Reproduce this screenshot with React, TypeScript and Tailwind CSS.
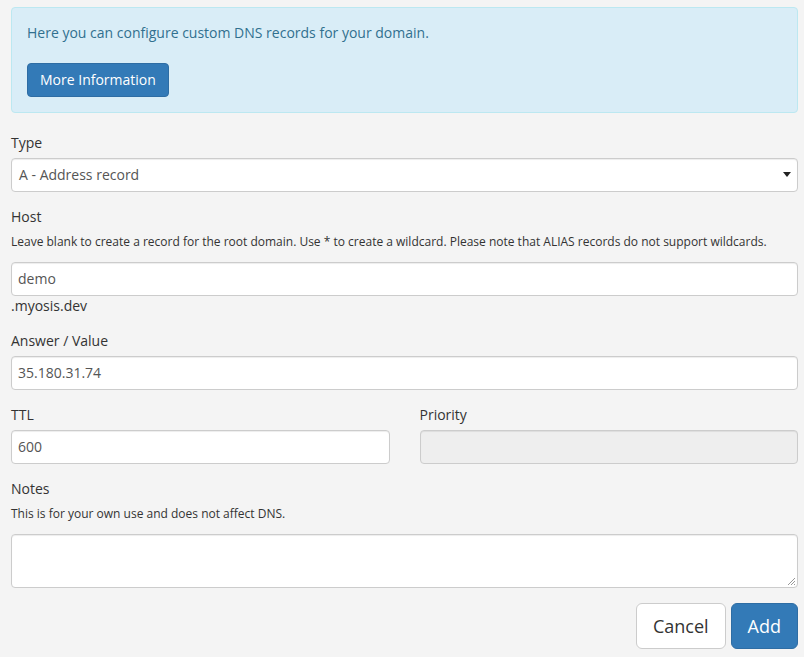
import React from "react";

export default function App() {
  const input =
    "block w-full h-[34px] rounded-[4px] border border-[#ccc] bg-white px-[12px] text-[14px] text-[#555] shadow-[inset_0_1px_1px_rgba(0,0,0,0.075)] outline-none";
  return (
    <div
      className="min-h-[657px] w-[804px] bg-[#f4f4f4] text-[#333] text-[14px] leading-[20px]"
      style={{ fontFamily: '"Open Sans", "Liberation Sans", sans-serif' }}
    >
      <div className="ml-[11px] w-[787px] pt-[7px]">
        <div className="rounded-[4px] border border-[#bce8f1] bg-[#d9edf7] p-[15px] text-[#31708f]">
          <p className="mb-[20px]">Here you can configure custom DNS records for your domain.</p>
          <button className="h-[34px] rounded-[4px] border border-[#2e6da4] bg-[#337ab7] px-[12px] text-[14px] text-white">
            More Information
          </button>
        </div>

        <div className="mt-[20px] mb-[15px]">
          <label className="mb-[5px] block">Type</label>
          <div className="relative">
            <div className={input + " flex items-center pl-[7px]"}>A - Address record</div>
            <svg className="absolute right-[7px] top-[14px]" width="8" height="5" viewBox="0 0 8 5">
              <path d="M0 0 L8 0 L4 5 Z" fill="#222" />
            </svg>
          </div>
        </div>

        <div className="mb-[15px]">
          <label className="mb-[5px] block">Host</label>
          <p className="mb-[10px] text-[12px]">
            Leave blank to create a record for the root domain. Use * to create a wildcard. Please note that ALIAS records do not support wildcards.
          </p>
          <div className={input + " flex items-center pl-[6px]"}>demo</div>
          <div className="leading-[20px]">.myosis.dev</div>
        </div>

        <div className="mb-[15px]">
          <label className="mb-[5px] block">Answer / Value</label>
          <div className={input + " flex items-center pl-[6px]"}>35.180.31.74</div>
        </div>

        <div className="mb-[15px] grid grid-cols-2 gap-x-[30px]">
          <div>
            <label className="mb-[5px] block">TTL</label>
            <div className={input + " flex items-center pl-[6px]"}>600</div>
          </div>
          <div>
            <label className="mb-[5px] block">Priority</label>
            <div className={input + " !bg-[#eee]"}></div>
          </div>
        </div>

        <div className="mb-[15px]">
          <label className="mb-[5px] block">Notes</label>
          <p className="mb-[10px] text-[12px]">This is for your own use and does not affect DNS.</p>
          <div className="relative h-[54px] w-full rounded-[4px] border border-[#ccc] bg-white shadow-[inset_0_1px_1px_rgba(0,0,0,0.075)]">
            <svg className="absolute bottom-[1px] right-[1px]" width="10" height="10" viewBox="0 0 10 10">
              <path d="M9 2 L2 9 M9 5 L5 9 M9 8 L8 9" stroke="#999" strokeWidth="1" />
            </svg>
          </div>
        </div>

        <div className="flex justify-end gap-[5px]">
          <button className="h-[46px] rounded-[6px] border border-[#ccc] bg-white px-[16px] text-[18px] text-[#333]">
            Cancel
          </button>
          <button className="h-[46px] rounded-[6px] border border-[#2e6da4] bg-[#337ab7] px-[16px] text-[18px] text-white">
            Add
          </button>
        </div>
      </div>
    </div>
  );
}
